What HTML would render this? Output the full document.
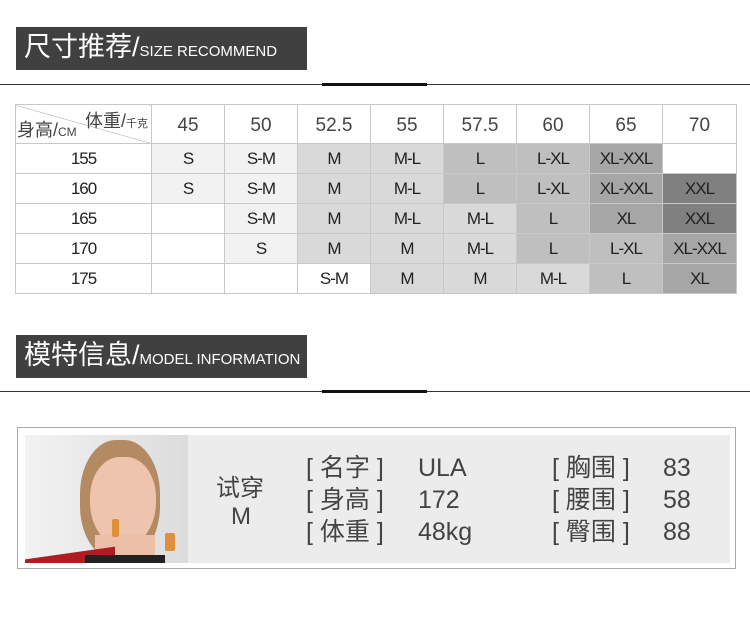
<!DOCTYPE html>
<html><head><meta charset="utf-8"><style>
body{margin:0;width:750px;height:638px;background:#fff;position:relative;overflow:hidden;font-family:"Liberation Sans","Noto Sans CJK SC",sans-serif;color:#333}
.hd{position:absolute;left:16px;width:291px;height:43px;background:#404040;color:#fff;}
.hd .c{position:absolute;left:8px;top:4px;font-size:27px;line-height:32px;white-space:nowrap}
.hd .e{font-size:15px}
.ln{position:absolute;left:0;width:750px;height:1px;background:#333}
.tk{position:absolute;left:322px;width:105px;height:3px;background:#111}
table{position:absolute;left:15px;top:104px;border-collapse:collapse;font-family:"Liberation Sans","Noto Sans CJK SC",sans-serif;}
td{border:1px solid #c8c8c8;text-align:center;font-size:17px;padding:0;height:29px;color:#222;letter-spacing:-1px}
tr.h td{height:34px;font-size:19px;color:#444;letter-spacing:0;padding-top:4px}
.a{background:#f2f2f2}.b{background:#d9d9d9}.c2{background:#bfbfbf}.d{background:#a6a6a6}.e2{background:#808080}
.t{position:absolute;font-size:25px;color:#444;line-height:30px}
</style></head><body>
<div class="hd" style="top:27px"><div class="c">尺寸推荐/<span class="e">SIZE RECOMMEND</span></div></div>
<div class="ln" style="top:84px"></div><div class="tk" style="top:83px"></div>

<table>
<tr class="h"><td style="width:135px;position:relative;background:linear-gradient(to top right,#fff calc(50% - 0.5px),#aaa 50%,#fff calc(50% + 0.5px))">
<span style="position:absolute;right:3px;top:2px;font-size:18px">体重/<span style="font-size:11px">千克</span></span>
<span style="position:absolute;left:1px;bottom:1px;font-size:18px">身高/<span style="font-size:12px">CM</span></span></td>
<td style="width:72px">45</td><td style="width:72px">50</td><td style="width:72px">52.5</td><td style="width:72px">55</td><td style="width:72px">57.5</td><td style="width:72px">60</td><td style="width:72px">65</td><td style="width:73px">70</td></tr>
<tr><td>155</td><td class="a">S</td><td class="a">S-M</td><td class="b">M</td><td class="b">M-L</td><td class="c2">L</td><td class="c2">L-XL</td><td class="d">XL-XXL</td><td></td></tr>
<tr><td>160</td><td class="a">S</td><td class="a">S-M</td><td class="b">M</td><td class="b">M-L</td><td class="c2">L</td><td class="c2">L-XL</td><td class="d">XL-XXL</td><td class="e2">XXL</td></tr>
<tr><td>165</td><td></td><td class="a">S-M</td><td class="b">M</td><td class="b">M-L</td><td class="b">M-L</td><td class="c2">L</td><td class="d">XL</td><td class="e2">XXL</td></tr>
<tr><td>170</td><td></td><td class="a">S</td><td class="b">M</td><td class="b">M</td><td class="b">M-L</td><td class="c2">L</td><td class="c2">L-XL</td><td class="d">XL-XXL</td></tr>
<tr><td>175</td><td></td><td></td><td>S-M</td><td class="b">M</td><td class="b">M</td><td class="b">M-L</td><td class="c2">L</td><td class="d">XL</td></tr>
</table>

<div class="hd" style="top:335px"><div class="c">模特信息/<span class="e">MODEL INFORMATION</span></div></div>
<div class="ln" style="top:391px"></div><div class="tk" style="top:390px"></div>

<div style="position:absolute;left:17px;top:427px;width:719px;height:142px;border:1px solid #aaa;box-sizing:border-box"></div>
<div style="position:absolute;left:25px;top:435px;width:705px;height:128px;background:#ececec"></div>
<div style="position:absolute;left:25px;top:435px;width:163px;height:128px;overflow:hidden;background:linear-gradient(90deg,#f2f2f2,#dcdcdc)">
<div style="position:absolute;left:55px;top:5px;width:80px;height:120px;border-radius:45%;background:#b48a62"></div>
<div style="position:absolute;left:65px;top:22px;width:66px;height:90px;border-radius:45% 45% 50% 50%;background:#efc4ae"></div>
<div style="position:absolute;left:70px;top:100px;width:60px;height:40px;background:#ecc0a8"></div>
<div style="position:absolute;left:0;top:118px;width:90px;height:30px;background:#b01c24;transform:skewY(-8deg)"></div>
<div style="position:absolute;left:60px;top:120px;width:80px;height:20px;background:#222"></div>
<div style="position:absolute;left:140px;top:98px;width:10px;height:18px;background:#e0903a;border-radius:2px"></div>
<div style="position:absolute;left:87px;top:84px;width:7px;height:18px;background:#e0903a;border-radius:2px"></div>
</div>
<div class="t" style="left:216px;top:474px;font-size:24px">试穿</div>
<div class="t" style="left:231px;top:502px;font-size:24px">M</div>
<div class="t" style="left:306px;top:453px">[ 名字 ]</div>
<div class="t" style="left:306px;top:485px">[ 身高 ]</div>
<div class="t" style="left:306px;top:517px">[ 体重 ]</div>
<div class="t" style="left:418px;top:453px">ULA</div>
<div class="t" style="left:418px;top:485px">172</div>
<div class="t" style="left:418px;top:517px">48kg</div>
<div class="t" style="left:552px;top:453px">[ 胸围 ]</div>
<div class="t" style="left:552px;top:485px">[ 腰围 ]</div>
<div class="t" style="left:552px;top:517px">[ 臀围 ]</div>
<div class="t" style="left:663px;top:453px">83</div>
<div class="t" style="left:663px;top:485px">58</div>
<div class="t" style="left:663px;top:517px">88</div>
</body></html>
